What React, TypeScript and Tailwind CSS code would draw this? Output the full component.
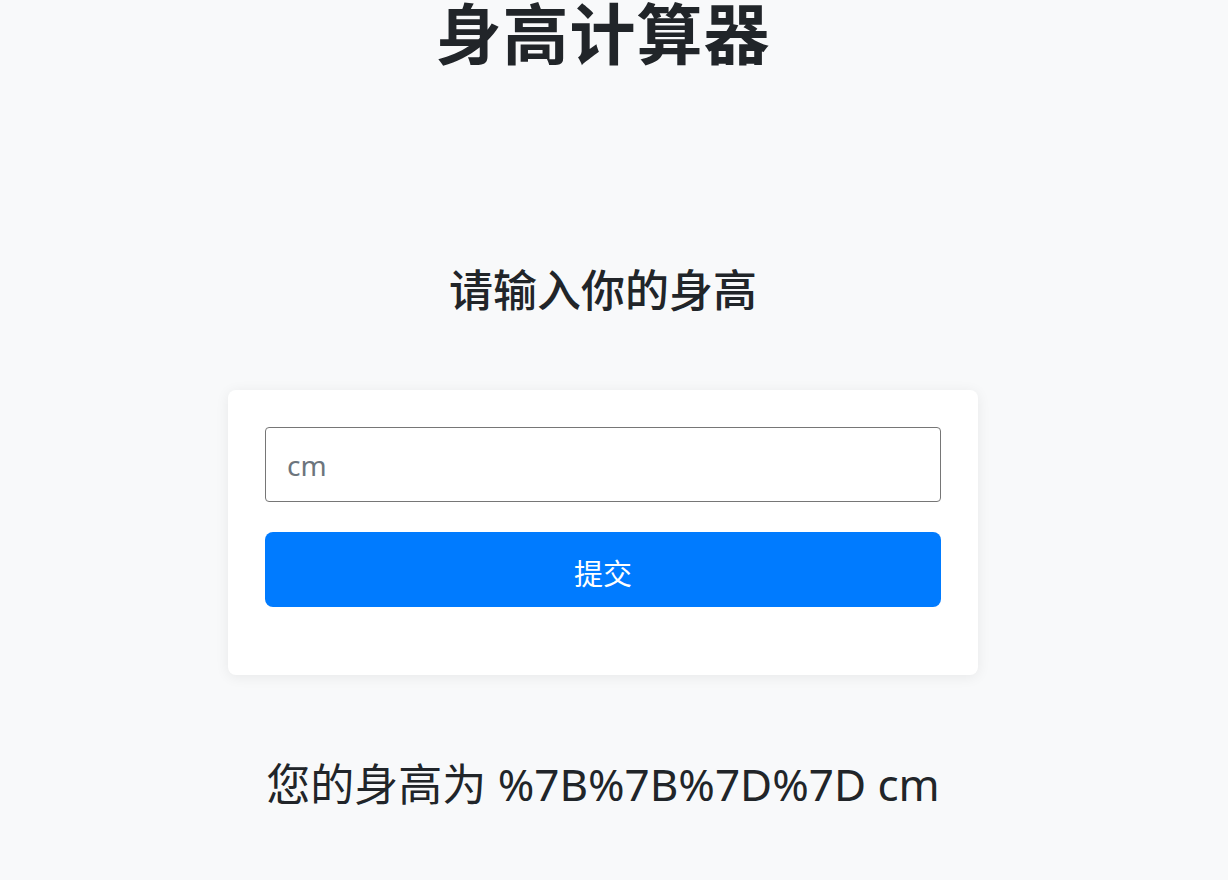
import React, { useState } from 'react';

const cjk = "font-['Segoe_UI','Noto_Sans','Noto_Sans_CJK_SC',sans-serif]";

export default function App() {
  const [height, setHeight] = useState('');

  return (
    <div className={`min-h-[880px] bg-[#f8f9fa] text-[#212529] ${cjk}`}>
      <div className="w-[1206px] flex flex-col items-center">
        <h1 className="text-[66px] leading-[66px] font-bold tracking-[1px]">身高计算器</h1>
        <h2 className="mt-[198px] text-[44px] leading-[53px] font-medium">请输入你的身高</h2>
        <div className="mt-[73px] w-[750px] h-[285px] bg-white rounded-lg shadow-[0_2px_14px_rgba(0,0,0,0.07)] px-[37px] pt-[37px]">
          <input
            type="text"
            value={height}
            onChange={(e) => setHeight(e.target.value)}
            placeholder="cm"
            className="w-full h-[75px] border border-[#767676] rounded-[4px] px-[21px] text-[28px] placeholder:text-[#6c757d] outline-none"
          />
          <button className="mt-[30px] w-full h-[75px] pt-[8px] bg-[#007bff] text-white text-[29px] rounded-lg">
            提交
          </button>
        </div>
        <p className="mt-[83px] text-[44px] leading-[53px]">您的身高为 %7B%7B%7D%7D cm</p>
      </div>
    </div>
  );
}
